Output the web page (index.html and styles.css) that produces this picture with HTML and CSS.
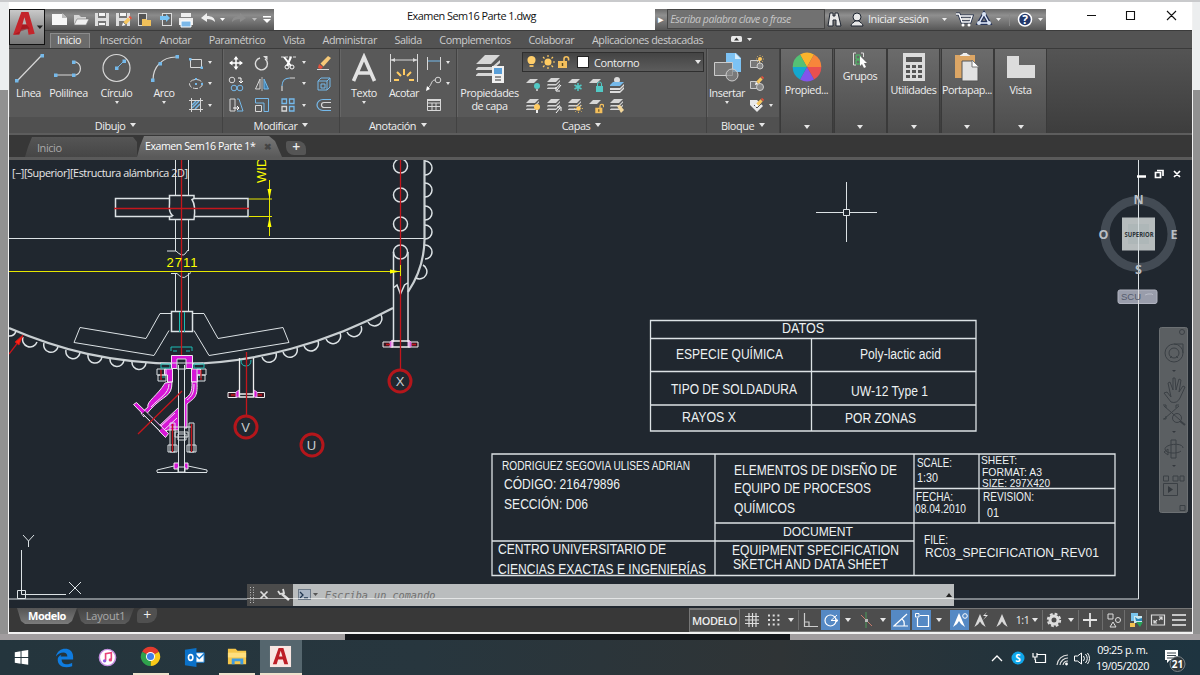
FILE: index.html
```html
<!DOCTYPE html>
<html lang="es">
<head>
  <meta charset="UTF-8">
  <title>Examen Sem16 Parte 1.dwg</title>
  <link rel="stylesheet" href="styles.css">
</head>
<body>
  <svg width="0" height="0" class="defs">
    <symbol id="sheet" viewBox="0 0 16 16"><path d="M1 6l4-4h8l-4 4z" fill="#d6d6d6"/></symbol>
    <symbol id="sheets" viewBox="0 0 16 16"><path d="M1 5l4-4h9l-4 4zM1 8l1-1h8l4-4v1.500l-4 4H1zM1 11.500l1-1h8l4-4V8l-4 4H1z" fill="#d6d6d6"/></symbol>
    <symbol id="bulb" viewBox="0 0 10 14"><path d="M3 9C0 7 0 1 5 1s5 6 2 8z" fill="#ffce6b"/><path d="M3 10h4v2H3z" fill="#e8b860"/></symbol>
    <symbol id="sun" viewBox="0 0 14 14"><circle cx="7" cy="7" r="3.500" fill="#ffcb62"/><path d="M7 0v2M7 12v2M0 7h2M12 7h2M2 2l1.500 1.500M10.500 10.500L12 12M12 2l-1.500 1.500M3.500 10.500L2 12" stroke="#ffcb62" stroke-width="1.200"/></symbol>
    <symbol id="lock" viewBox="0 0 12 14"><path d="M6 7V4a2.300 2.300 0 0 1 4.600 0v1.500" fill="none" stroke="#f4bf5c" stroke-width="1.600"/><rect x="0" y="6" width="9" height="7" fill="#f4bf5c"/><path d="M4.500 8v3" stroke="#5a4a20" stroke-width="1.400"/></symbol>
    <symbol id="pencil" viewBox="0 0 10 10"><path d="M0 10l1-3.500 2.500 2.500z" fill="#fff"/><path d="M1.500 6L6 1.500 8.500 4 4 8.500z" fill="#f6c65f"/><path d="M6.500 1L8 0l2 2-1 1.500z" fill="#e8503a"/></symbol>
    <symbol id="person-a" viewBox="0 0 14 16"><path d="M7 1l6 14-4-3-2-3-2 3-4 3z" fill="#d9d9d9"/></symbol>
  </svg>

  <div class="desktop">
    <main class="window">
      <header class="titlebar">
        <div class="quick-access">
          <svg width="226" height="21" viewBox="0 0 226 21">
            <path d="M4 5h11l4 4v7H4z" fill="#f6f6f6"/><path d="M14 4l5 5h-5z" fill="#bbb"/>
            <path d="M26 16V6h5l2 2h5v3H29z" fill="#d5d5d5"/><path d="M29 10h12l-3 6H26z" fill="#f0f0f0" stroke="#777" stroke-width=".6"/>
            <g fill="#dedede"><path d="M47 4h14v13H47zM68 4h14v13H68z"/></g>
            <path d="M50 4h8v5h-8zM50 12h8v5h-8zM71 4h8v5h-8zM71 12h8v5h-8z" fill="#777"/><path d="M51 4h6v3h-6zM51 14h6v2h-6zM72 4h6v3h-6z" fill="#f5f5f5"/>
            <use href="#pencil" x="74" y="7" width="10" height="10"/>
            <rect x="90.500" y="4.500" width="8" height="12" fill="#555" stroke="#ddd"/><path d="M94 10h4l1 1h4v6h-9z" fill="#f0c05a"/>
            <rect x="114.500" y="4.500" width="9" height="12" fill="#666" stroke="#ddd"/><path d="M112 7h6V5l4 4-4 4v-2h-6z" fill="#79c4f5"/>
            <path d="M131 9h14v7h-14zM133 4h10v4h-10z" fill="#eee"/><path d="M133 12h10v6h-10z" fill="#7cb8e8" stroke="#fff"/>
            <path d="M153 9l6-5v3c5 0 8 2 8 6-2-2-4-3-8-3v3z" fill="#eee"/><path d="M172 9h5l-2.500 3z" fill="#fff"/>
            <path d="M198 9l-6-5v3c-5 0-8 2-8 6 2-2 4-3 8-3v3z" fill="#8c8c8c"/><path d="M204 9h5l-2.500 3z" fill="#bbb"/>
            <path d="M215 7h8v1.500h-8zM215 10h8l-4 4z" fill="#fff"/>
          </svg>
        </div>
        <h1 class="doc-title">Examen Sem16 Parte 1.dwg</h1>
        <div class="search-bar">
          <span class="search-toggle">&#9656;</span>
          <span class="search-input">Escriba palabra clave o frase</span>
          <svg width="42" height="21" viewBox="0 0 42 21">
            <g fill="#e8e8e8" stroke="#1e2530" stroke-width="1"><path d="M5 4h3v3h2V4h3l3 13h-5v-6H8v6H3z"/><circle cx="32" cy="8" r="4"/><path d="M26 17c0-3 3-3 4-5h4c1 2 4 2 4 5z"/></g>
          </svg>
          <span class="login">Iniciar sesión</span>
          <svg width="118" height="21" viewBox="0 0 118 21">
            <path d="M14 9h5l-2.500 3zM68 9h5l-2.500 3zM110 9h5l-2.500 3z" fill="#eee"/>
            <path d="M28 5h3l3 8h8l2-6H32" fill="none" stroke="#202c48" stroke-width="3"/><path d="M28 5h3l3 8h8l2-6H32M33 10h10" fill="none" stroke="#fff" stroke-width="1.400"/><circle cx="35" cy="16" r="1.500" fill="#fff"/><circle cx="41" cy="16" r="1.500" fill="#fff"/>
            <path d="M56 5l5 9H51z" fill="none" stroke="#27355a" stroke-width="4"/><path d="M56 5l5 9H51z" fill="none" stroke="#e5edff" stroke-width="1.500"/><circle cx="56" cy="5" r="2" fill="#dbe5f5"/><circle cx="51" cy="14" r="2" fill="#dbe5f5"/><circle cx="61" cy="14" r="2" fill="#dbe5f5"/>
            <path d="M81.500 4v13" stroke="#888"/><circle cx="97" cy="10.500" r="6.500" fill="#23386b" stroke="#fff" stroke-width="1.500"/>
            <text x="97" y="15" class="help">?</text>
          </svg>
        </div>
        <svg class="win-buttons" width="146" height="28" viewBox="1046 2 146 28">
          <path d="M1087 15.500h9M1126.500 11.500h8v8h-8zM1167 11l9 9M1176 11l-9 9" fill="none" stroke="#111" stroke-width="1.100"/>
        </svg>
      </header>

      <nav class="menu">
        <a class="active">Inicio</a><a>Inserción</a><a>Anotar</a><a>Paramétrico</a><a>Vista</a><a>Administrar</a><a>Salida</a><a>Complementos</a><a>Colaborar</a><a>Aplicaciones destacadas</a>
        <svg class="menu-end" width="22" height="12" viewBox="0 0 22 12"><rect x="0" y="3" width="11" height="6" rx="1.500" fill="#e8e8e8"/><path d="M3 7.500l2.500-3 2.500 3z" fill="#333"/><path d="M16 5h5l-2.500 3z" fill="#e8e8e8"/></svg>
      </nav>

      <section class="ribbon">
        <div class="panel draw">
          <div class="tools">
            <div class="tool"><svg width="30" height="30" viewBox="0 0 30 30"><path d="M3 28L28 2" stroke="#d8d8d8" stroke-width="1.200"/><path d="M1 26h3.500v3.500H1zM26.500 1H30v3.500h-3.500z" fill="#75b9ea"/></svg>Línea</div>
            <div class="tool"><svg width="30" height="30" viewBox="0 0 30 30"><path d="M2 22h20a7 7 0 0 0 0-13h-3" fill="none" stroke="#d8d8d8" stroke-width="1.200"/><path d="M0 20.500h3.500V24H0zM18 20.500h3.500V24H18zM18 7.500h3.500V11H18z" fill="#75b9ea"/></svg>Polilínea</div>
            <div class="tool"><svg width="30" height="30" viewBox="0 0 30 30"><circle cx="14.500" cy="15" r="13.500" fill="none" stroke="#d8d8d8" stroke-width="1.200"/><path d="M15 15l7-7" stroke="#75b9ea"/><path d="M13 13.500h3.500V17H13zM20.500 6.500H24V10h-3.500z" fill="#75b9ea"/></svg>Círculo<i class="caret"></i></div>
            <div class="tool"><svg width="30" height="30" viewBox="0 0 30 30"><path d="M4 27C4 14 13 4 27 4" fill="none" stroke="#d8d8d8" stroke-width="1.200"/><path d="M2 25.500h3.500V29H2zM9.500 9H13v3.500H9.500zM26.500 2H30v3.500h-3.500z" fill="#75b9ea"/></svg>Arco<i class="caret"></i></div>
            <div class="small-tools one">
              <svg viewBox="0 0 16 16"><path d="M2.500 4.500h11v8h-11z" fill="none" stroke="#d8d8d8"/><path d="M1 3h2.500v2.500H1zM12.500 11.500H15V14h-2.500z" fill="#75b9ea"/></svg><i class="caret"></i>
              <svg viewBox="0 0 16 16"><ellipse cx="8" cy="8" rx="6.500" ry="4.500" fill="none" stroke="#d8d8d8" stroke-dasharray="5 1.500"/><path d="M7 7h2v2H7zM7 2h2v2H7zM13 7h2v2h-2z" fill="#75b9ea"/></svg><i class="caret"></i>
              <svg viewBox="0 0 16 16"><path d="M4 11l7-7M4 8l4-4M7 12l5-5" stroke="#75b9ea" stroke-width="1.500"/><path d="M3.500 1v14M12.500 1v14M1 3.500h14M1 12.500h14" stroke="#d8d8d8"/></svg><i class="caret"></i>
            </div>
          </div>
          <h2>Dibujo <i class="caret big"></i></h2>
        </div>

        <div class="panel modify">
          <div class="tools">
            <div class="small-tools four">
              <svg viewBox="0 0 16 16"><path d="M8 2v12M2 8h12" stroke="#fff" stroke-width="1.500"/><path d="M8 1l2.500 3.500h-5zM8 15l2.500-3.500h-5zM1 8l3.500-2.500v5zM15 8l-3.500-2.500v5z" fill="#fff"/></svg>
              <svg viewBox="0 0 16 16"><path d="M6 3a6 6 0 1 0 5 1" fill="none" stroke="#ddd" stroke-width="1.400"/><path d="M9 1h4.500v4.500z" fill="#ddd"/></svg>
              <svg viewBox="0 0 16 16"><path d="M1 2h15" stroke="#ddd" stroke-dasharray="3 1"/><path d="M4 2l7 9M11 2L7 11" stroke="#fff" stroke-width="2"/><circle cx="7" cy="12" r="2" fill="none" stroke="#fff"/><circle cx="12" cy="12" r="2" fill="none" stroke="#fff"/></svg><i class="caret"></i>
              <svg viewBox="0 0 16 16"><path d="M1 14.500h12" stroke="#d8d8d8"/><path d="M3 9l4 3-2 2-3-1z" fill="#e8503a"/><path d="M4.500 8.500L12 1l3 2-7.500 8.500z" fill="#f6c978"/></svg>

              <svg viewBox="0 0 16 16"><circle cx="4" cy="4" r="2.800" fill="none" stroke="#d8d8d8"/><circle cx="6" cy="12" r="2.800" fill="none" stroke="#75b9ea"/><circle cx="12" cy="12" r="2.800" fill="none" stroke="#75b9ea"/><path d="M10 2h3v4M11 5l2 2 2-2" fill="none" stroke="#fff"/></svg>
              <svg viewBox="0 0 16 16"><path d="M6 3v10H1.500z" fill="none" stroke="#d8d8d8"/><path d="M10 3v10h4.500z" fill="#3e7fae" stroke="#75b9ea"/><path d="M8 1v14" stroke="#bbb"/></svg>
              <svg viewBox="0 0 16 16"><path d="M2 15v-5M10 2h5" stroke="#d8d8d8" stroke-width="1.200"/><path d="M2 10c0-5 3-8 8-8" fill="none" stroke="#75b9ea" stroke-width="1.200"/></svg><i class="caret"></i>
              <svg viewBox="0 0 16 16"><path d="M2 5h9v9H2zM5 2h9v9M2 5l3-3M11 5l3-3M11 14l3-3M5 8h4v4H5z" fill="none" stroke="#75b9ea"/></svg>

              <svg viewBox="0 0 16 16"><path d="M2 2h5v12H2z" fill="none" stroke="#d8d8d8"/><path d="M9 2h2l4 12H9" fill="none" stroke="#75b9ea"/><path d="M5 11h6M9 9l2 2-2 2" fill="none" stroke="#fff"/></svg>
              <svg viewBox="0 0 16 16"><path d="M1.500 8.500h6v6h-6z" fill="none" stroke="#d8d8d8"/><path d="M1.500 6V1.500h13v13H10V6z" fill="none" stroke="#75b9ea"/></svg>
              <svg viewBox="0 0 16 16"><path d="M2 2h4.500v4.500H2zM9.500 2H14v4.500H9.500zM9.500 9.500H14V14H9.500z" fill="none" stroke="#75b9ea" stroke-width="1.300"/><path d="M2 9.500h4.500V14H2z" fill="none" stroke="#d8d8d8" stroke-width="1.300"/></svg><i class="caret"></i>
              <svg viewBox="0 0 16 16"><path d="M15 2.500H7a6 5.500 0 0 0 0 11h8" fill="none" stroke="#75b9ea" stroke-width="1.200"/><path d="M15 5.500H8a2.500 2.500 0 0 0 0 5h7" fill="none" stroke="#d8d8d8" stroke-width="1.200"/></svg>
            </div>
          </div>
          <h2>Modificar <i class="caret big"></i></h2>
        </div>

        <div class="panel annotate">
          <div class="tools">
            <div class="tool"><svg width="30" height="30" viewBox="0 0 30 30"><path d="M4.500 28L15 4l10.500 24M8 20h14" fill="none" stroke="#e2e2e2" stroke-width="3.600"/></svg>Texto<i class="caret"></i></div>
            <div class="tool"><svg width="30" height="30" viewBox="0 0 30 30"><path d="M1.500 1v28M28.500 1v28M2 7h26" stroke="#d8d8d8"/><path d="M2 7l4-2v4zM28 7l-4-2v4z" fill="#d8d8d8"/><path d="M15 16v6M8 19l4 4M22 19l-4 4M5 27h5M20 27h5" stroke="#ffcb62" stroke-width="2"/></svg>Acotar</div>
            <div class="small-tools one">
              <svg viewBox="0 0 16 16"><path d="M1.500 2v13M14.500 2v13" stroke="#d8d8d8"/><path d="M2 6h12" stroke="#75b9ea"/></svg><i class="caret"></i>
              <svg viewBox="0 0 16 16"><circle cx="12" cy="4" r="2.800" fill="none" stroke="#d8d8d8"/><path d="M9 4C5 4 6 9 2 12" fill="none" stroke="#d8d8d8"/><path d="M0 15l1-5 3 3z" fill="#fff"/></svg><i class="caret"></i>
              <svg viewBox="0 0 16 16"><path d="M1.500 2.500h13v11h-13zM1 6h14M1 9.500h14M6 6v8M10 6v8" fill="none" stroke="#d8d8d8"/><path d="M1 2h14v2H1z" fill="#d8d8d8"/></svg>
            </div>
          </div>
          <h2>Anotación <i class="caret big"></i></h2>
        </div>

        <div class="panel layers">
          <div class="tools">
            <div class="tool wide"><svg width="30" height="30" viewBox="0 0 30 30"><path d="M1 11L10 2h15l-9 9zM1 16l2-2h14l8-7v3l-8 7H1zM1 22l2-2h14l8-7v3l-8 7H1z" fill="#d6d6d6"/><rect x="17" y="13" width="12" height="17" fill="#f1f1f1"/><path d="M19 15h8v6h-8z" fill="#5a9fd8"/><path d="M20 24h6M20 27h6" stroke="#333"/></svg>Propiedades<br>de capa</div>
            <div class="layer-side">
              <div class="layer-select">
                <svg width="54" height="18" viewBox="0 0 54 18"><use href="#bulb" x="1" y="2" width="11" height="14"/><use href="#sun" x="16" y="2" width="14" height="14"/><use href="#lock" x="33" y="2" width="12" height="14"/></svg>
                <span class="swatch"></span><span class="layer-name">Contorno</span><i class="caret big"></i>
              </div>
              <div class="layer-grid">
                <svg viewBox="0 0 16 16"><use href="#sheet"/><circle cx="12" cy="9" r="3" fill="#52c9c5"/><path d="M11 12h2v2h-2z" fill="#bbb"/></svg>
                <svg viewBox="0 0 16 16"><use href="#sheets"/><path d="M15 8l-4 5M10 10v4h4" stroke="#fff" fill="none"/></svg>
                <svg viewBox="0 0 16 16"><use href="#sheet"/><path d="M11 6v8M7.500 8l7 4M14.500 8l-7 4" stroke="#52c9c5" stroke-width="1.500"/></svg>
                <svg viewBox="0 0 16 16"><use href="#sheet"/><path d="M9.500 9V7a2 2 0 0 1 4 0v2" fill="none" stroke="#52c9c5"/><path d="M8 9h7v6H8z" fill="#52c9c5"/></svg>
                <svg viewBox="0 0 16 16"><circle cx="8" cy="3" r="3" fill="#ddd"/><path d="M1 8l3-3h11l-4 4H1z" fill="#75b9ea"/><path d="M1 11h10l4-4v2l-4 4H1zM1 14h10l4-4v2l-4 4H1z" fill="#ddd"/></svg>
                <svg viewBox="0 0 16 16"><use href="#sheets"/><circle cx="12" cy="9" r="3" fill="#ffcb62"/><path d="M11 12h2v3h-2z" fill="#eee"/></svg>
                <svg viewBox="0 0 16 16"><use href="#sheets"/><path d="M10 15l4-5M11 9h4v4" stroke="#fff" fill="none"/></svg>
                <svg viewBox="0 0 16 16"><use href="#sheets"/><use href="#sun" x="7" y="6" width="9" height="9"/></svg>
                <svg viewBox="0 0 16 16"><use href="#sheet"/><use href="#lock" x="7" y="5" width="10" height="11"/></svg>
                <svg viewBox="0 0 16 16"><use href="#sheets"/><path d="M8 8l3-1 4 5-3 3z" fill="#f3d79b"/></svg>
              </div>
            </div>
          </div>
          <h2>Capas <i class="caret big"></i></h2>
        </div>

        <div class="panel block">
          <div class="tools">
            <div class="tool"><svg width="30" height="30" viewBox="0 0 30 30"><path d="M14 0h10l5 5v14H14z" fill="#7cc2f4"/><path d="M23 0l6 6h-6z" fill="#d7ecfb"/><path d="M2.500 9.500h18v13h-18z" fill="#777" stroke="#ccc"/><circle cx="20" cy="22" r="6" fill="#888" fill-opacity=".7" stroke="#ccc"/></svg>Insertar<i class="caret"></i></div>
            <div class="small-tools one">
              <svg viewBox="0 0 16 16"><path d="M1.500 5.500h9v7h-9z" fill="#777" stroke="#ccc"/><circle cx="11" cy="11" r="3" fill="#888" stroke="#ccc"/><use href="#sun" x="7" y="0" width="8" height="8"/></svg><b></b>
              <svg viewBox="0 0 16 16"><path d="M1.500 5.500h9v7h-9z" fill="#777" stroke="#ccc"/><circle cx="11" cy="11" r="3.500" fill="#888" stroke="#ccc"/><use href="#pencil" x="6" y="0" width="9" height="9"/></svg><b></b>
              <svg viewBox="0 0 16 16"><path d="M1 3h7l6 6-6 6-7-7z" fill="#e8e8e8"/><path d="M5 8l3 3 4-4" fill="none" stroke="#555"/><use href="#pencil" x="6" y="1" width="9" height="9"/></svg><i class="caret"></i>
            </div>
          </div>
          <h2>Bloque <i class="caret big"></i></h2>
        </div>

        <div class="folded">
          <svg width="30" height="30" viewBox="-15 -15 30 30"><path d="M0 0L-7 -12.500A14.300 14.300 0 0 1 7 -12.500z" fill="#fbb42c"/><path d="M0 0L7 -12.500A14.300 14.300 0 0 1 14.300 0z" fill="#f7863b"/><path d="M0 0H14.300A14.300 14.300 0 0 1 7 12.500z" fill="#e9504f"/><path d="M0 0L7 12.500A14.300 14.300 0 0 1 -7 12.500z" fill="#8254ec"/><path d="M0 0L-7 12.500A14.300 14.300 0 0 1 -14.300 0z" fill="#14a8cf"/><path d="M0 0H-14.300A14.300 14.300 0 0 1 -7 -12.500z" fill="#54c174"/></svg>
          Propied...<i class="caret big"></i>
        </div>
        <div class="folded">
          <svg width="16" height="16" viewBox="0 0 16 16"><path d="M4 1H1.500v12H4M9 1h2.500v4" fill="none" stroke="#ddd"/><path d="M4 3h4v4H4zM4 8h4v4H4z" fill="none" stroke="#4cc368"/><path d="M8 4v10l2-2 2 4 2-1-2-4h3z" fill="#fff"/></svg>
          Grupos<i class="caret big"></i>
        </div>
        <div class="folded">
          <svg width="30" height="30" viewBox="0 0 30 30"><path d="M4 1h22v28H4z" fill="#dcdcdc"/><path d="M7 5h16v5H7zM7 13h4v3H7zM13 13h4v3h-4zM19 13h4v3h-4zM7 18h4v3H7zM13 18h4v3h-4zM19 18h4v3h-4zM7 23h4v3H7zM13 23h4v3h-4zM19 23h4v3h-4z" fill="#555"/></svg>
          Utilidades<i class="caret big"></i>
        </div>
        <div class="folded">
          <svg width="30" height="30" viewBox="0 0 30 30"><path d="M3 3h20v23H3z" fill="#dca665"/><path d="M8 4c0-2 3-1 3-3h4c0 2 3 1 3 3z" fill="#eee"/><path d="M10 9h11l5 5v15H10z" fill="#e2e2e2" stroke="#555"/><path d="M20 8v7h7z" fill="#fff" stroke="#777"/></svg>
          Portapap...<i class="caret big"></i>
        </div>
        <div class="folded">
          <svg width="30" height="30" viewBox="0 0 30 30"><path d="M1 4h12v9h16v13H1z" fill="#dcdcdc"/></svg>
          Vista<i class="caret big"></i>
        </div>
      </section>

      <div class="file-tabs">
        <span class="file-tab">Inicio</span>
        <span class="file-tab current">Examen Sem16 Parte 1* <b>&#10006;</b></span>
        <span class="file-add">+</span>
      </div>

      <section class="canvas">
        <svg class="drawing" width="1183" height="448" viewBox="9 160 1183 448">
          <!-- vessel shell and coils -->
          <g class="w">
            <path d="M9 328C60 350 110 363 181 364C255 364 330 342 393 308M408 292Q424 268 424.500 240V160" stroke-width="2.200" stroke="#c9cfd2"/>
            <path d="M9 238.500h415M1138.500 160v439H9"/>
            <g stroke-width="1.500">
              <path d="M9 336a7 7 0 0 0 7-5M23 337a7 7 0 0 0 14 5M44 343a7 7 0 0 0 14 4M66 350a7 7 0 0 0 14 3M88 355a7 7 0 0 0 14 2M110 359a7 7 0 0 0 14 1M132 362a7 7 0 0 0 14 1M262 357a7 7 0 0 0 14-4M283 352a7 7 0 0 0 14-4M304 346a7 7 0 0 0 14-5M326 339a7 7 0 0 0 14-6M347 332a7 7 0 0 0 14-6M368 322a7 7 0 0 0 13-7"/>
              <path d="M425 161a7 7 0 0 1 0 14M425 183a7 7 0 0 1 0 14M425 206a7 7 0 0 1 0 14M425 225a7 7 0 0 1 0 14M425 245a7 7 0 0 1 0 14M423 265a7 7 0 1 1-7 13"/>
              <circle cx="400.500" cy="166" r="7"/><circle cx="400.500" cy="195" r="7"/><circle cx="400.500" cy="224" r="7"/><circle cx="400.500" cy="252" r="7"/>
              <path d="M393.500 252v90M408 252v90M393.500 288l3.500-3 3.500 9 4-9 3-2"/>
            </g>
            <!-- agitator -->
            <path d="M175.500 160v35M188.500 160v35M175.500 219v32M188.500 219v32M175.500 273v39M188.500 273v39M167 251h9q6 6 9 3l3-4M171 273.500h6q6 6 9 3l5-4"/>
            <path d="M169.500 198.500h-54v18h57M194 198.500h54v18h-54M169.500 195.500h24.500v3l-2 1q4 6 2 20h-24.500v-3l3-1q-4-3-3-12z" stroke-width="1.500"/>
            <path d="M171.500 311.500h21v20h-21z" stroke-width="1.500"/>
            <path d="M171 313.500h-11l-14 25-66-11-6 15 80 13 15-25M193 313.500h11l14 25 65-11 6 15-80 13-15-25"/>
          </g>

          <!-- nozzle flanges -->
          <g fill="#d615d6" stroke="#eee">
            <path d="M383 342h9v5h-9zM409 342h9v5h-9zM228 392.500h9v5h-9zM255.500 392.500h9v5h-9z" fill="#3a1420"/>
            <path d="M390 342l3-2v7h-3zM411 342l-3-2v7h3zM236 392l3-2v7h-3zM257 392l-3-2v7h3z" stroke="#e8a0e8"/>
            <path d="M239.500 358v39h14v-39M239 394h15M392 341h17v6h-17z" fill="none" stroke-width="1.300"/>
          </g>
          <path d="M241 360q0 6 5 6t5-6" class="c"/>

          <!-- angle valve -->
          <g fill="#d615d6" stroke="#f0e8f0">
            <path d="M171.500 355.500h21v13h-21z"/>
            <path d="M164.500 369h8v13h-5v-7h-3zM191.500 369h9v6h-3v7h-6z"/>
            <path d="M172 382c0 16-8 12-22 28l-6 7-3-4 7-6c-2-5 10-12 17-24z"/>
            <path d="M169 384c0 10-10 14-18 23" fill="none"/>
            <path d="M192 382h5c1 16-3 16-10 22v24h-4v-28c8-5 9-8 9-18z"/>
            <path d="M194 384c0 9-2 12-7 16" fill="none"/>
            <path d="M157 428l22-21v23h-11l-6 2z"/><path d="M160 427l15-14M164 430l13-12" fill="none"/>
            <path d="M133.500 404.500l3-2 32 31-3 4z"/>
            <path d="M174 463h14v6h-14z"/>
          </g>
          <path d="M145 411l17 17-3 3-17-17z" fill="#20272f"/>
          <path d="M178.500 368h6v104h-6zM177 359h9v10h-9z" fill="#20272f"/>
          <g class="w">
            <path d="M143 414l17 17M178.500 365v107M184.500 365v107M177 359h9v10h-9zM175 432h13v5h-13zM170 427h22"/>
            <path d="M157 369h9v6h-9zM158 375h8v6h-8zM197 369h9v6h-9zM197 375h8v6h-8zM170 423h5v29h-5zM189 423h5v29h-5zM168 445h9v7h-9zM187 445h9v7h-9zM178 434h8v6h-8zM157 470l17-4M207 470l-19-4M157 472.500h50M157 470v2M207 470v2M178 467h7v5h-7zM160 363h43"/>
          </g>
          <path d="M171 351v-4h21v4M173 351h4M186 351h4M161 364h9v4h-9zM194 364h10v4h-10zM162 377h3M199 377h3M179.500 312v20M184.500 312v20" class="c"/>
          <g class="r">
            <path d="M181.500 160v195M114 208.500h135M400.500 160v209M246.500 352v64M138 434l44-43M9 354l13-17M161 370v10M201 370v10M172.500 424v28M191.500 424v28M386 344.500h4M412 344.500h4M231 395h4M258 395h4" stroke-width="1.300"/>
            <path d="M15 342l8-7-4 10z" fill="#f21" />
            <g stroke-width="3" stroke="#b4161b"><circle cx="400" cy="381" r="11"/><circle cx="246" cy="427" r="11"/><circle cx="312" cy="445" r="11"/></g>
          </g>
          <g class="label"><text x="400" y="386">X</text><text x="245.500" y="432">V</text><text x="311.500" y="450">U</text></g>

          <!-- dimensions -->
          <g class="y">
            <path d="M9 271.500h391M400.500 265v11M249 199h23M249 216.500h23M269.500 180v56" fill="none"/>
            <path d="M400 271.500l-10-2v4zM269.500 199l-2-10h4zM269.500 217l-2 10h4z" stroke="none"/>
            <text x="166.500" y="266.500" textLength="31" stroke="none">2711</text>
            <text transform="translate(266 183) rotate(-90)" stroke="none">WID</text>
          </g>

          <!-- data table -->
          <g class="w">
            <path d="M650.500 320.500h325.500v110.500h-325.500zM650 338.500h326M650 371.500h326M650 405h326M811.500 338.500V431" stroke-width="1.300"/>
            <path d="M492 454h623v121.500h-623zM715 454v121M914 454v121M979 454v69M914 488.500h201M715 523h400M492 541h422" stroke-width="1.300"/>
          </g>
          <g class="cad">
            <text x="782" y="333" textLength="42" lengthAdjust="spacingAndGlyphs">DATOS</text>
            <text x="676" y="359" textLength="107" lengthAdjust="spacingAndGlyphs">ESPECIE QUÍMICA</text>
            <text x="860" y="359" textLength="81" lengthAdjust="spacingAndGlyphs">Poly-lactic acid</text>
            <text x="671" y="394" textLength="126" lengthAdjust="spacingAndGlyphs">TIPO DE SOLDADURA</text>
            <text x="851" y="396" textLength="77" lengthAdjust="spacingAndGlyphs">UW-12 Type 1</text>
            <text x="682" y="422" textLength="54" lengthAdjust="spacingAndGlyphs">RAYOS X</text>
            <text x="845" y="423" textLength="71" lengthAdjust="spacingAndGlyphs">POR ZONAS</text>

            <text x="502" y="470" textLength="188" lengthAdjust="spacingAndGlyphs" class="s">RODRIGUEZ SEGOVIA ULISES ADRIAN</text>
            <text x="504" y="489" textLength="116" lengthAdjust="spacingAndGlyphs">CÓDIGO: 216479896</text>
            <text x="504" y="509" textLength="84" lengthAdjust="spacingAndGlyphs">SECCIÓN: D06</text>
            <text x="498" y="554" textLength="168" lengthAdjust="spacingAndGlyphs">CENTRO UNIVERSITARIO DE</text>
            <text x="498" y="574" textLength="208" lengthAdjust="spacingAndGlyphs">CIENCIAS EXACTAS E INGENIERÍAS</text>
            <text x="734" y="475" textLength="163" lengthAdjust="spacingAndGlyphs">ELEMENTOS DE DISEÑO DE</text>
            <text x="734" y="492.500" textLength="137" lengthAdjust="spacingAndGlyphs">EQUIPO DE PROCESOS</text>
            <text x="734" y="513" textLength="61" lengthAdjust="spacingAndGlyphs">QUÍMICOS</text>
            <text x="783" y="535.500" textLength="70" lengthAdjust="spacingAndGlyphs" class="m">DOCUMENT</text>
            <text x="732" y="554.500" textLength="167" lengthAdjust="spacingAndGlyphs">EQUIPMENT SPECIFICATION</text>
            <text x="733" y="569" textLength="155" lengthAdjust="spacingAndGlyphs">SKETCH AND DATA SHEET</text>
            <text x="917" y="467" textLength="35" lengthAdjust="spacingAndGlyphs" class="s">SCALE:</text>
            <text x="917" y="482" textLength="21" lengthAdjust="spacingAndGlyphs" class="s">1:30</text>
            <text x="916" y="501" textLength="37" lengthAdjust="spacingAndGlyphs" class="s">FECHA:</text>
            <text x="915" y="513" textLength="51" lengthAdjust="spacingAndGlyphs" class="s">08.04.2010</text>
            <text x="981" y="464" textLength="36" lengthAdjust="spacingAndGlyphs" class="xs">SHEET:</text>
            <text x="982" y="476" textLength="60" lengthAdjust="spacingAndGlyphs" class="xs">FORMAT: A3</text>
            <text x="982" y="486.500" textLength="68" lengthAdjust="spacingAndGlyphs" class="xs">SIZE: 297X420</text>
            <text x="983" y="501" textLength="51" lengthAdjust="spacingAndGlyphs" class="s">REVISION:</text>
            <text x="987" y="517" textLength="12" lengthAdjust="spacingAndGlyphs" class="s">01</text>
            <text x="924" y="543.500" textLength="24" lengthAdjust="spacingAndGlyphs" class="s">FILE:</text>
            <text x="925" y="557" textLength="174" lengthAdjust="spacingAndGlyphs" class="m">RC03_SPECIFICATION_REV01</text>
          </g>

          <!-- cursor and UCS icon -->
          <g class="w"><path d="M816 212.500h27M850 212.500h27M846.500 182v27M846.500 216v26M843.500 209.500h6v6h-6z"/><path d="M21.500 550v44.500H66M17.500 590.500h8v8h-8zM23 535l5.500 6 5.500-6M28.500 541v6M69 582l12 12M81 582l-12 12"/></g>
          <text x="12" y="177" textLength="176" class="view-label">[−][Superior][Estructura alámbrica 2D]</text>

          <!-- view cube -->
          <circle cx="1138.500" cy="234" r="33.500" fill="none" stroke="#434b54" stroke-width="9"/>
          <rect x="1122" y="217.500" width="33" height="33" fill="#b6bcbd"/><rect x="1128" y="224" width="21" height="20" fill="#a6b1b4" opacity=".5"/>
          <path d="M1138.500 160v144" stroke="#dce3e6" opacity=".8"/>
          <g class="cube"><text x="1138.500" y="204">N</text><text x="1138.500" y="274">S</text><text x="1103.500" y="239">O</text><text x="1174" y="239">E</text></g>
          <text x="1124.500" y="237" textLength="29" class="cube-face" lengthAdjust="spacingAndGlyphs">SUPERIOR</text>
          <rect x="1118" y="290" width="39" height="13.500" rx="2" fill="#999dab" stroke="#b1b4c0"/><path d="M1138.500 290v14" stroke="#ddd"/>
          <text x="1121" y="300" class="scu">SCU</text><path d="M1145 295l3-1 4 0 1 1" stroke="#b9bcc8" fill="none"/>
          <path d="M1137 176.500h9" stroke="#fff" stroke-width="2.500"/><path d="M1155.500 172.500h5v5h-5zM1157 170.500h6v5.500M1174 171l6 6M1180 171l-6 6" fill="none" stroke="#fff" stroke-width="1.700"/>

          <!-- navigation bar -->
          <rect x="1159.500" y="327.500" width="28" height="185" rx="2" fill="#5b5f62" stroke="#6c7073"/>
          <g fill="none" stroke="#3b4045">
            <circle cx="1182" cy="332" r="2.500"/><circle cx="1174" cy="353" r="9"/><circle cx="1174" cy="353" r="5"/><path d="M1174 344h9v9M1170 358l2-2M1178 358l-2-2"/>
            <path d="M1164 393l3-1 4 5-3-14 2-1 3 8v-12h2l1 12 3-11 2 1-2 12 4-6 2 1-5 11q-3 6-9 4z"/>
            <path d="M1164 406l16 14M1179 406l-15 13M1163 405h3v3M1179 405h-3v3M1163 419h3v-3"/><circle cx="1177" cy="418" r="4.500"/><path d="M1180 421l5 4" stroke-width="2"/>
            <path d="M1171 440h5v18h-5zM1183 448c0-6-18-4-18 1s13 5 16 2M1164 452l4-3v6z"/>
            <path d="M1163.500 476h5v5h-5zM1173 476h5v5h-5zM1180 476h4v5h-4zM1163.500 483.500h14v12h-14zM1180 505.500h5v5h-5z"/>
          </g>
          <path d="M1168 486v7l5-3.500zM1172 370h4l-2 2zM1172 431h4l-2 2zM1172 465h4l-2 2z" fill="#34393e"/>
        </svg>

        <div class="command">
          <svg width="46" height="22" viewBox="0 0 46 22"><path d="M3.500 3v16M6.500 3v16" stroke="#bbb" stroke-dasharray="1 1.500"/><path d="M13.500 7.500l7 7M20.500 7.500l-7 7" stroke="#ddd" stroke-width="1.700"/><path d="M35 10l7 6" stroke="#ddd" stroke-width="2.500"/><path d="M31 7l2 3 4-1-1-4" fill="none" stroke="#ddd" stroke-width="1.800"/></svg>
          <svg width="30" height="22" viewBox="0 0 30 22"><rect x="5.500" y="5.500" width="12" height="10" fill="#a9b5c4" stroke="#6d7a88"/><path d="M7 8l3 3-3 3M11 14h4" fill="none" stroke="#223850" stroke-width="1.300"/><path d="M20 9h5l-2.500 3z" fill="#555"/></svg>
          <span>Escriba un comando</span>
          <i class="up"></i>
        </div>
      </section>

      <footer class="bottom">
        <div class="layout-tabs"><span class="layout-tab on">Modelo</span><span class="layout-tab">Layout1</span><span class="layout-add">+</span></div>
        <div class="status">
          <span class="cell model">MODELO</span>
          <span class="cell grid-btn"><svg viewBox="0 0 16 16"><path d="M5 1v14M8.500 1v14M12 1v14M1 4.500h14M1 8h14M1 11.500h14" stroke="#ddd" stroke-width="1.200"/></svg></span>
          <span class="cell dots"><svg viewBox="0 0 16 16"><path d="M2 3.500h12M2 8h12M2 12.500h12" stroke="#ddd" stroke-width="2" stroke-dasharray="2 2.700"/></svg></span>
          <span class="cell drop"><i class="caret big"></i></span>
          <span class="cell line"><svg viewBox="0 0 16 16"><path d="M2.500 1v13.500H16M3 10h4v4" fill="none" stroke="#ccc" stroke-width="1.200"/></svg></span>
          <span class="cell blue"><svg viewBox="0 0 16 16"><circle cx="7.500" cy="8.500" r="5.500" fill="none" stroke="#fff" stroke-width="1.200"/><path d="M14 3L8 8.500h7M12 6l3 2.500-3 2" fill="none" stroke="#fff"/></svg></span>
          <span class="cell drop"><i class="caret big"></i></span>
          <span class="cell"><svg viewBox="0 0 16 16"><path d="M3 3l11 11" stroke="#c77a6c"/><path d="M8 0v16" stroke="#4d9b5a"/><path d="M7 7h3v3H7z" fill="#bbb"/></svg></span>
          <span class="cell drop"><i class="caret big"></i></span>
          <span class="cell blue"><svg viewBox="0 0 16 16"><path d="M15 14H1L14 2M9 7q3 2 2 7" fill="none" stroke="#fff" stroke-width="1.200"/></svg></span>
          <span class="cell blue"><svg viewBox="0 0 16 16"><path d="M3.500 6v8.500h11v-11H6" fill="none" stroke="#fff" stroke-width="1.200"/><path d="M1.500 1.500H5V5H1.500z" fill="none" stroke="#fff"/></svg></span>
          <span class="cell drop"><i class="caret big"></i></span>
          <span class="cell blue gap"><svg viewBox="0 0 16 16"><path d="M7 1l6 14-4-3-2-3-2 3-4 3z" fill="#fff"/><circle cx="13" cy="4" r="2.300" fill="none" stroke="#fff"/></svg></span>
          <span class="cell"><svg viewBox="0 0 16 16"><use href="#person-a" x="0" y="1" width="14" height="15"/><path d="M14 0l-4 4h3l-3 4 5-5h-3z" fill="#eee"/></svg></span>
          <span class="cell"><svg viewBox="0 0 16 16"><use href="#person-a" x="1" y="1" width="14" height="15"/></svg></span>
          <span class="cell scale">1:1 <i class="caret big"></i></span>
          <span class="cell line"><svg viewBox="0 0 16 16"><circle cx="8" cy="8" r="4" fill="none" stroke="#ddd" stroke-width="3"/><circle cx="8" cy="8" r="6.200" fill="none" stroke="#ddd" stroke-width="2" stroke-dasharray="2.800 2.060"/></svg></span>
          <span class="cell drop"><i class="caret big"></i></span>
          <span class="cell line"><svg viewBox="0 0 16 16"><path d="M8 1v14M1 8h14" stroke="#e5e5e5" stroke-width="1.800"/></svg></span>
          <span class="cell line shapes"><svg viewBox="0 0 16 16"><path d="M2 2h5v5H2zM7 10l3 5H4z" fill="none" stroke="#ddd"/><circle cx="12" cy="8" r="2.500" fill="none" stroke="#ddd"/></svg></span>
          <span class="cell line"><svg viewBox="0 0 16 16"><path d="M3 1h7v8H3z" fill="#7ac5ed"/><path d="M6 4h8v7H6z" fill="#cde8ee"/><path d="M7 5l3 2 4-1v3H8z" fill="#2784b8"/><path d="M8 10h7l-3 5z" fill="#2aa35a"/><path d="M2 11h5v4H2z" fill="#f3c352"/></svg></span>
          <span class="cell line"><svg viewBox="0 0 16 16"><path d="M1.500 3h13v10h-13zM9 5h3v3M7 11H4V8M12 5L9 8M4 11l3-3" fill="none" stroke="#ddd" stroke-width="1.200"/></svg></span>
          <span class="cell"><svg viewBox="0 0 16 16"><path d="M1 3h14M1 8h14M1 13h14" stroke="#eee" stroke-width="1.500"/></svg></span>
        </div>
      </footer>

      <div class="app-button">
        <svg width="34" height="34" viewBox="0 0 33 33"><path d="M3 24L11 2h7l6 21-6 1-1-6-6 1-2 5z" fill="#c4252b"/><path d="M12 14l2-7 2 7z" fill="#b5b5b5"/><path d="M3 24l6-1 3-9 4 0 3 4-10 3z" fill="#8f1219" opacity=".55"/><path d="M26 15h6l-3 3.500z" fill="#222"/></svg>
      </div>
    </main>
    <div class="behind"><span></span></div>

    <div class="taskbar">
      <span class="app"><svg viewBox="0 0 24 24"><path d="M5 6.500l6-1v6H5zM12 5.300l7-1v7.200h-7zM5 12.500h6v6l-6-1zM12 12.500h7v7l-7-1z" fill="#fff"/></svg></span>
      <span class="app"><svg viewBox="0 0 24 24"><path d="M3 11C5 0 21 0 21 11v3H9c0 6 7 6 11 3.500V21C12 24 4 21 5 13c1-3 4-4 4-4-1 1-1 2-1 2h7c0-6-8-5-12 0z" fill="#0f7ce0"/></svg></span>
      <span class="app"><svg viewBox="0 0 24 24"><circle cx="12" cy="12" r="8.500" fill="#fff" stroke="#c58fe0" stroke-width="1.500"/><path d="M10 15V8l6-1v7" fill="none" stroke="#e8447a" stroke-width="1.700"/><circle cx="9" cy="15.500" r="1.800" fill="#8d5ae0"/><circle cx="15" cy="14.500" r="1.800" fill="#e8447a"/></svg></span>
      <span class="app open"><svg viewBox="0 0 24 24"><path d="M12 12L3.300 7a10 10 0 0 1 17.400 0z" fill="#e33b2e"/><path d="M12 12L20.700 7a10 10 0 0 1-8.700 15z" fill="#fbc918"/><path d="M12 12v10A10 10 0 0 1 3.300 7z" fill="#2fa24c"/><circle cx="12" cy="12" r="4.700" fill="#fff"/><circle cx="12" cy="12" r="3.700" fill="#3f7ee8"/></svg></span>
      <span class="app"><svg viewBox="0 0 24 24"><path d="M12 7h10v10H12z" fill="#fff" stroke="#1779cc"/><path d="M13 9l4 4 5-5" fill="none" stroke="#1779cc" stroke-width="1.500"/><path d="M2 4l12-2v20L2 20z" fill="#0b71c8"/><ellipse cx="8" cy="12" rx="2.300" ry="3" fill="none" stroke="#fff" stroke-width="1.700"/></svg></span>
      <span class="app open"><svg viewBox="0 0 24 24"><path d="M2 4h8l2 2h9v14H2z" fill="#f5c64a"/><path d="M2 8h19v5H2z" fill="#ffdf7e"/><path d="M6 20v-6h12v6h-3v-3H9v3z" fill="#3f9be0"/></svg></span>
      <span class="app open focused"><svg viewBox="0 0 24 24"><path d="M1 1h22v22H1z" fill="#f8e6e2"/><path d="M4 20L10 3h5l5 17h-4l-1.500-5H9.500L8 20zM10.500 12h3.500l-1.800-6z" fill="#bd1e26" fill-rule="evenodd"/></svg></span>
      <div class="tray">
        <svg width="104" height="24" viewBox="990 645 104 24">
          <path d="M992 660l5-5 5 5" fill="none" stroke="#fff" stroke-width="1.300"/>
          <circle cx="1018" cy="657" r="6.500" fill="#0fa6ea"/><text x="1018" y="661" class="skype">S</text>
          <path d="M1036.500 653.500h9v8h-10v-3M1033 652v4h4v-4M1035 656v3" fill="none" stroke="#fff" stroke-width="1.200"/>
          <path d="M1057 664a11 11 0 0 1 11-10M1060 664a8 8 0 0 1 8-7M1063 664a5 5 0 0 1 5-4" fill="none" stroke="#ddd" stroke-width="1.200"/><circle cx="1066.500" cy="663" r="1.400" fill="#fff"/>
          <path d="M1074.500 655h3l4-3v11l-4-3h-3zM1083.500 655q2 2.500 0 5M1085.500 653q3.500 4.500 0 9M1087.500 652q4 5.500 0 11" fill="none" stroke="#fff"/>
        </svg>
        <div class="clock">09:25 p. m.<br>19/05/2020</div>
        <svg width="30" height="28" viewBox="1160 644 30 28"><path d="M1165 650h13v10h-8l-3 3v-3h-2z" fill="#fff"/><path d="M1167 653h9M1167 655.500h9M1167 658h6" stroke="#26343c" stroke-width=".9"/><circle cx="1177.500" cy="664" r="7.500" fill="#30383d" stroke="#7c8488"/><text x="1177.500" y="668" class="count">21</text></svg>
      </div>
    </div>
  </div>
</body>
</html>
```

FILE: styles.css
```css
* {
  box-sizing: border-box;
}
body {
  margin: 0;
  font-family: "Open Sans", "Noto Sans", sans-serif;
  font-size: 11px;
  letter-spacing: -.45px;
  color: #eee;
  overflow: hidden;
}
.defs {
  position: absolute;
}
svg {
  flex: none;
}
svg text {
  letter-spacing: 0;
}
.desktop {
  width: 1200px;
  height: 675px;
  display: flex;
  flex-direction: column;
  background: linear-gradient(#c9cacc 0 2px, #eceeef 2px 90px, #919191 90px);
}
.window {
  position: relative;
  width: 1185px;
  height: 632px;
  margin: 2px 0 0 8px;
  background: #373737;
  border: 1px solid #f1f1f1;
  border-top: 0;
  border-bottom-width: 2px;
  display: flex;
  flex-direction: column;
}

/* title bar */
.titlebar {
  height: 28px;
  flex: none;
  background: #fff;
  display: flex;
  justify-content: space-between;
}
.quick-access {
  width: 265px;
  height: 21px;
  margin-top: 7px;
  padding-left: 39px;
  background: linear-gradient(#6b6b6b, #8b8b8b 30%, #565656);
}
.doc-title {
  margin: 0;
  width: 382px;
  padding-left: 133px;
  color: #111;
  font-size: 10.900px;
  font-weight: 400;
  line-height: 27px;
  white-space: nowrap;
  letter-spacing: -.5px;
}
.search-bar {
  display: flex;
  width: 392px;
  height: 21px;
  margin-top: 7px;
  background: linear-gradient(#6b6b6b, #8f8f8f 30%, #575757);
  line-height: 20px;
  overflow: hidden;
}
.search-toggle {
  width: 12px;
  color: #fff;
  text-align: center;
}
.search-input {
  width: 158px;
  height: 20px;
  border: 1px solid #454545;
  background: #717171;
  padding-left: 2px;
  font-style: italic;
  color: #c6c6c6;
  line-height: 18px;
  font-size: 10.500px;
}
.login {
  width: 61px;
  padding-left: 1px;
  font-size: 11px;
  white-space: nowrap;
}
.help {
  font-size: 12px;
  font-weight: 700;
  fill: #fff;
  text-anchor: middle;
}

/* ribbon tabs */
.menu {
  display: flex;
  flex: none;
  align-items: flex-end;
  height: 18px;
  padding-left: 41px;
  background: #535353;
  border-top: 1px solid #3b3b3b;
}
.menu a {
  height: 15px;
  line-height: 13px;
  padding: 0 8.800px;
  color: #ccc;
  font-size: 10.800px;
  white-space: nowrap;
}
.menu a.active {
  width: 40px;
  margin-right: 1px;
  color: #f5f5f5;
  background: #6b6b6b;
  border: 1px solid #8b8b8b;
  border-bottom: 0;
  padding: 0 6px;
  line-height: 11px;
}
.menu-end {
  margin: 0 0 3px 19px;
}
.app-button {
  position: absolute;
  left: 0;
  top: 7px;
  width: 36px;
  height: 36px;
  border: 1px solid #111;
  background: linear-gradient(#c9c9c9, #999 50%, #777);
}

/* ribbon */
.ribbon {
  display: flex;
  flex: none;
  height: 87px;
  border-top: 1px solid #3a3a3a;
  border-bottom: 2px solid #5d5d5d;
  background: linear-gradient(#545454, #3d3d3d);
}
.panel {
  display: flex;
  flex-direction: column;
  height: 84px;
  background: #595959;
  border-right: 1px solid #424242;
  box-shadow: inset 1px 0 #666;
}
.draw { width: 214px; }
.modify { width: 117px; }
.annotate { width: 117px; }
.layers { width: 250px; }
.block { width: 73px; }
.panel h2 {
  margin: 0;
  height: 16px;
  font-size: 10.900px;
  font-weight: 400;
  line-height: 15px;
  background: #505050;
  display: flex;
  align-items: center;
  justify-content: center;
  gap: 5px;
}
.tools {
  display: flex;
  height: 68px;
  flex: none;
}
.tool {
  display: flex;
  flex-direction: column;
  align-items: center;
  text-align: center;
  line-height: 13px;
  padding-top: 4px;
  width: 40px;
  font-size: 10.800px;
  white-space: nowrap;
}
.tool svg {
  margin-bottom: 3px;
}
.tool .caret {
  margin-top: 2px;
}
.draw .tool:nth-child(1) { width: 39px; }
.draw .tool:nth-child(2) { width: 41px; }
.draw .tool:nth-child(3) { width: 55px; }
.annotate .tools { padding-left: 4px; }
.draw .small-tools { margin-left: 2px; }
.layers .wide {
  width: 65px;
}
.caret {
  width: 0;
  height: 0;
  border: 2.500px solid transparent;
  border-top: 3px solid #e6e6e6;
  border-bottom: 0;
}
.caret.big {
  border-width: 3.500px;
  border-top-width: 4px;
  border-bottom: 0;
}
.small-tools {
  display: grid;
  grid-auto-rows: 21.300px;
  align-items: center;
  justify-items: center;
  padding-top: 3px;
}
.small-tools svg,
.layer-grid svg,
.cell svg {
  width: 16px;
  height: 16px;
}
.one {
  grid-template-columns: 19px 10px;
}
.four {
  grid-template-columns: 26px 26px 26px 5px 33px;
}
.four > :nth-child(5n) {
  margin-left: 2px;
}
.layer-side {
  padding-top: 3px;
}
.layer-select {
  display: flex;
  align-items: center;
  width: 182px;
  height: 20px;
  padding: 0 2px 0 2px;
  border: 1px solid #2f2f2f;
  background: linear-gradient(#444, #5c5c5c);
}
.swatch {
  width: 12px;
  height: 12px;
  margin-left: -2px;
  background: #fff;
  border: 1px solid #222;
}
.layer-name {
  flex: 1;
  padding-left: 5px;
}
.layer-grid {
  display: grid;
  grid-template-columns: repeat(5, 21px);
  grid-auto-rows: 21px;
  align-items: center;
  justify-items: center;
  padding-top: 2px;
}
.folded {
  display: flex;
  flex-direction: column;
  align-items: center;
  width: 51px;
  margin-left: 1px;
  margin-right: 1.500px;
  padding-top: 3px;
  height: 84px;
  background: linear-gradient(#6b6b6b, #4d4d4d);
  box-shadow: 1px 0 #3a3a3a, -1px 0 #3a3a3a;
  font-size: 10.800px;
  line-height: 16px;
  white-space: nowrap;
}
.folded .caret {
  margin-top: auto;
  margin-bottom: 4px;
}

/* file tabs */
.file-tabs {
  display: flex;
  flex: none;
  align-items: flex-end;
  height: 25px;
  padding-left: 16px;
  background: #373737;
  border-bottom: 3px solid #5a5a5a;
}
.file-tab {
  width: 112px;
  height: 20px;
  padding-left: 12px;
  line-height: 21px;
  color: #aaa;
  background: linear-gradient(#555, #464646);
  clip-path: polygon(7px 0, 108px 0, 112px 5px, 112px 100%, 0 100%, 3px 10px);
}
.file-tab.current {
  width: 145px;
  height: 21px;
  padding-left: 8px;
  font-size: 10.600px;
  color: #fff;
  white-space: nowrap;
  background: linear-gradient(#777, #5a5a5a);
  clip-path: polygon(7px 0, 132px 0, 138px 5px, 145px 100%, 0 100%, 3px 10px);
}
.file-tab b {
  margin-left: 6px;
  font-size: 9px;
  color: #444;
}
.file-add {
  width: 20px;
  height: 14px;
  margin: 0 0 2px 4px;
  font-size: 14px;
  line-height: 12px;
  font-weight: 600;
  text-align: center;
  background: #555;
  border-radius: 2px 8px 2px 8px;
}

/* drawing area */
.canvas {
  position: relative;
  height: 448px;
  flex: none;
  background: #20272f;
}
.drawing {
  display: block;
}
.w {
  fill: none;
  stroke: #dce2e5;
}
.r {
  fill: none;
  stroke: #c4161c;
}
.c {
  fill: none;
  stroke: #1dbdb5;
}
.y {
  fill: #ffff00;
  stroke: #e6e600;
  font-family: "Liberation Sans", sans-serif;
  font-size: 13px;
}
.label {
  fill: #c9ced0;
  font-family: "Liberation Sans", sans-serif;
  font-size: 13px;
  text-anchor: middle;
}
.cad {
  fill: #edf1f2;
  font-family: "Liberation Sans", sans-serif;
  font-size: 14px;
}
.cad .m { font-size: 13.500px; }
.cad .s { font-size: 12px; }
.cad .xs { font-size: 11px; }
.view-label {
  fill: #e8e8e8;
  font-size: 10.800px;
}
.cube {
  fill: #b9bfc4;
  font-size: 12.500px;
  font-weight: 700;
  text-anchor: middle;
}
.cube-face {
  fill: #2d3438;
  font-size: 7px;
  font-weight: 700;
}
.scu {
  fill: #555b6b;
  font-family: "Liberation Sans", sans-serif;
  font-size: 9.500px;
}
.command {
  position: absolute;
  left: 238px;
  top: 424px;
  width: 707px;
  height: 22px;
  display: flex;
  align-items: center;
  background: linear-gradient(90deg, #4b4b4b 46px, #babdbe 46px);
  font-family: "DejaVu Sans Mono", monospace;
  font-style: italic;
  font-size: 10.200px;
  letter-spacing: 0;
  color: #707070;
}
.command::after {
  content: "";
  position: absolute;
  left: 0;
  right: 0;
  top: 14px;
  height: 1px;
  background: rgba(255, 255, 255, .6);
}
.command span {
  flex: 1;
  padding-left: 2px;
}
.up {
  border: 3.500px solid transparent;
  border-bottom: 4px solid #222;
  border-top: 0;
  margin-right: 2px;
}

/* layout tabs and status bar */
.bottom {
  display: flex;
  justify-content: space-between;
  height: 24px;
  background: #383838;
}
.layout-tabs {
  display: flex;
  padding-left: 8px;
  line-height: 15px;
}
.layout-tab {
  width: 57px;
  height: 16px;
  text-align: center;
  color: #aaa;
  letter-spacing: -.2px;
  background: linear-gradient(#444, #5b5b5b);
  clip-path: polygon(0 0, 100% 0, 52px 13px, 48px 16px, 8px 16px, 4px 13px);
}
.layout-tab.on {
  width: 60px;
  color: #fff;
  font-weight: 700;
  letter-spacing: -.5px;
  background: linear-gradient(#555, #7b7b7b);
  clip-path: polygon(0 0, 100% 0, 55px 13px, 51px 16px, 8px 16px, 4px 13px);
}
.layout-add {
  width: 20px;
  height: 15px;
  margin-left: 3px;
  font-size: 14px;
  line-height: 14px;
  text-align: center;
  background: #505050;
  border-radius: 6px 2px 9px 2px;
}
.status {
  display: flex;
  align-items: center;
  height: 24px;
  padding-right: 3px;
  background: #4d4d4d;
  border-top: 1px solid #777;
  border-bottom: 1px solid #777;
}
.cell {
  width: 21px;
  height: 20px;
  flex: none;
  display: flex;
  align-items: center;
  justify-content: center;
}
.model {
  width: 51px;
  height: 23px;
  border: 1px solid #777;
  font-size: 11px;
  font-weight: 600;
}
.grid-btn { width: 24px; }
.dots { width: 20px; }
.drop { width: 14px; }
.blue {
  background: #5589c4;
  border: solid #4d4d4d;
  border-width: 0 1px;
}
.gap { margin-left: 3px; }
.line {
  border-left: 1px solid #6e6e6e;
  width: 22px;
}
.shapes { margin-left: 2px; }
.scale {
  width: 30px;
  gap: 3px;
  font-size: 10.500px;
}

/* strip of the window behind */
.behind {
  height: 6px;
  background: #a19d9f;
}
.behind span {
  display: block;
  width: 445px;
  height: 6px;
  margin-left: 345px;
  background: #14171b;
}

/* taskbar */
.taskbar {
  display: flex;
  height: 35px;
  background: linear-gradient(90deg, #24353d, #27363e 35%, #2f3436 65%, #22333c 85%, #1e3440);
}
.app {
  display: flex;
  align-items: center;
  justify-content: center;
  width: 36px;
  height: 35px;
  margin-right: 7.300px;
}
.app:first-child {
  margin-left: 3px;
}
.app svg {
  width: 23px;
  height: 23px;
}
.app.open {
  border-bottom: 2px solid #efe2cd;
}
.app.focused {
  width: 42px;
  margin-left: -3px;
  background: #55666e;
}
.tray {
  display: flex;
  align-items: center;
  margin-left: auto;
  padding-right: 10px;
}
.clock {
  width: 66px;
  padding-right: 9px;
  text-align: center;
  line-height: 15.500px;
  font-size: 10.800px;
  color: #fff;
  white-space: nowrap;
}
.skype,
.count {
  font-size: 10px;
  font-weight: 700;
  fill: #fff;
  text-anchor: middle;
}
```
